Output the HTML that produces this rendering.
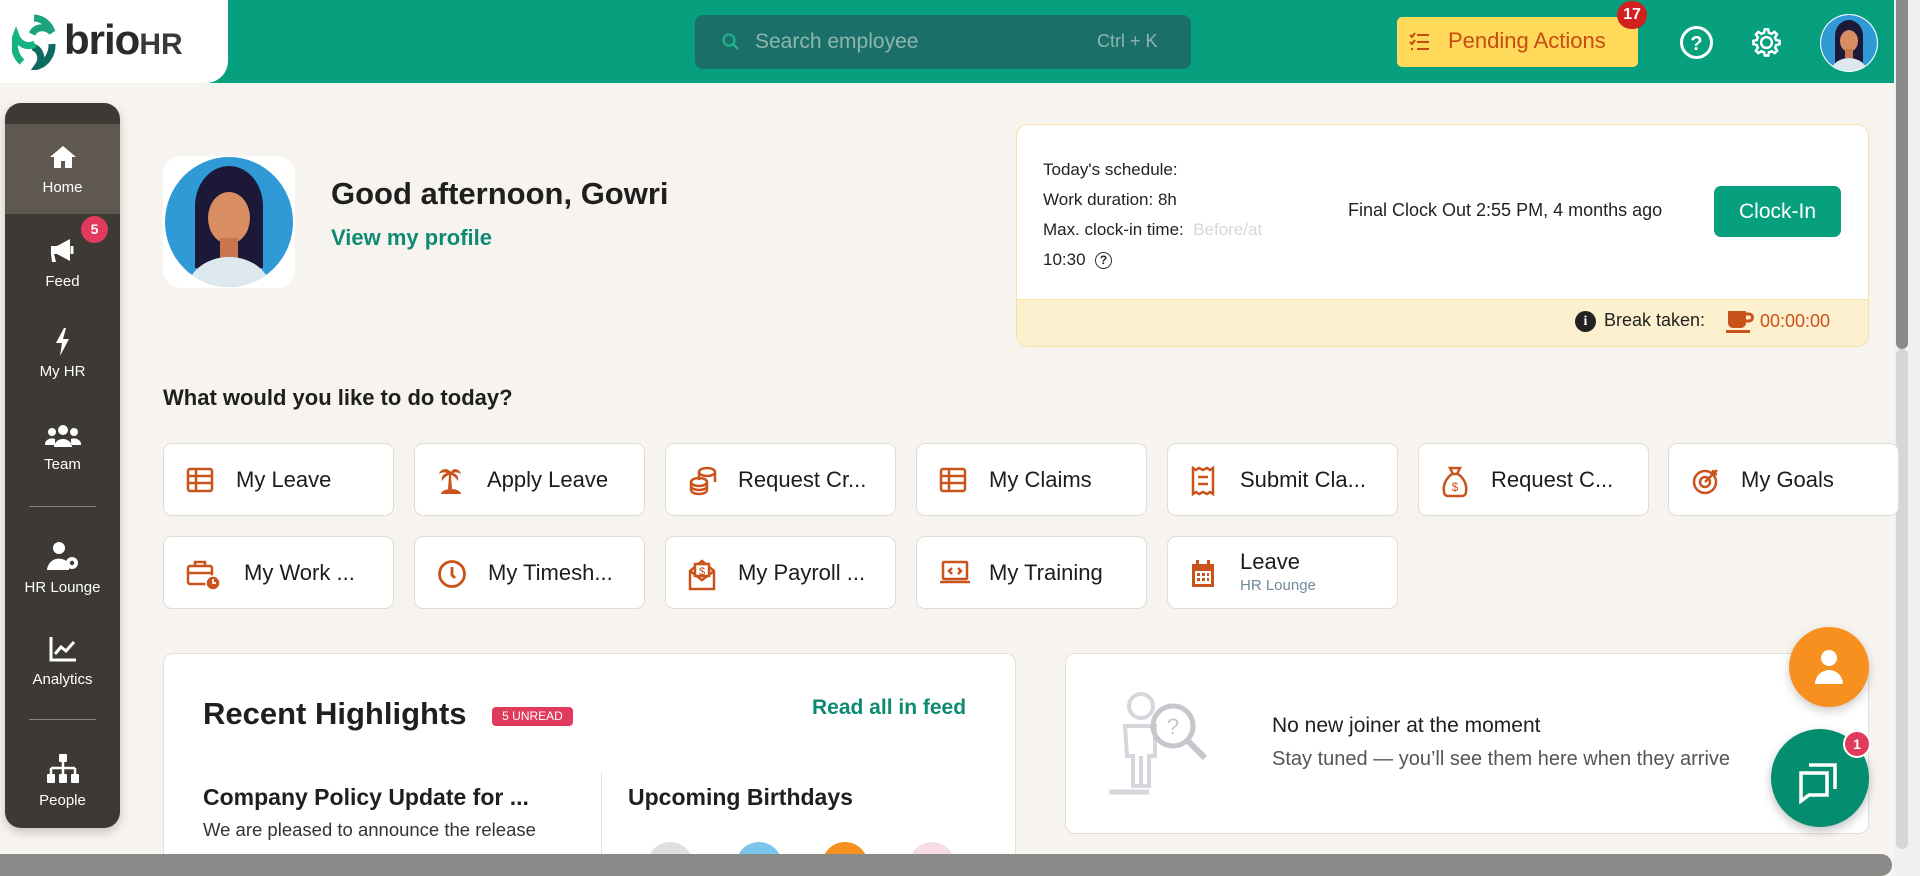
<!DOCTYPE html>
<html style="overflow:hidden;width:1920px;height:876px"><head><meta charset="utf-8"><style>
*{box-sizing:border-box;margin:0;padding:0}
body{width:1920px;height:876px;overflow:hidden;background:#f7f4ef;font-family:"Liberation Sans",sans-serif;color:#1f1f1f;position:relative}
.a{position:absolute}
.hdr{left:0;top:0;width:1894px;height:83px;background:#06a07f}
.logo{left:0;top:0;width:228px;height:83px;background:#fff;border-radius:0 0 22px 0}
.side{left:5px;top:103px;width:115px;height:725px;background:#3d3935;border-radius:16px;box-shadow:0 4px 10px rgba(0,0,0,.2)}
.nav{position:absolute;left:0;width:115px;text-align:center;color:#fff;font-size:15px}
.card{background:#fff;border:1px solid #e3e0db;border-radius:10px}
.tile{position:absolute;width:231px;height:73px;background:#fff;border:1px solid #e0ddd8;border-radius:9px;font-size:22px;color:#1c1c1c}
.tile span{position:absolute;left:72px;top:23px;white-space:nowrap}
.tile svg{position:absolute;left:22px;top:22px}
</style></head><body>
<div class="a hdr"></div>
<div class="a logo">
<svg class="a" style="left:12px;top:14px" width="44" height="56" viewBox="0 0 44 56"><path d="M22 4a20 22 0 0 1 18 14c-6-6-16-6-20 2" fill="none" stroke="#1aa37d" stroke-width="7"/><path d="M40 30a20 22 0 0 1-14 22c5-7 3-16-5-19" fill="none" stroke="#0d6b5f" stroke-width="7"/><path d="M10 48A20 22 0 0 1 4 22c3 8 11 12 19 8" fill="none" stroke="#14b381" stroke-width="7"/></svg>
<div class="a" style="left:64px;top:16px;font-size:42px;font-weight:bold;color:#2a2a2a;letter-spacing:-1px">brio<span style="font-size:30px;color:#3a3a3a;letter-spacing:0">HR</span></div>
</div>
<div class="a" style="left:695px;top:15px;width:496px;height:54px;background:#1a7069;border-radius:8px"></div>
<svg class="a" style="left:722px;top:33px" width="18" height="18" viewBox="0 0 18 18"><circle cx="7" cy="7" r="5.5" fill="none" stroke="#1fb48c" stroke-width="2.2"/><path d="M11 11l5 5" stroke="#1fb48c" stroke-width="2.4"/></svg>
<div class="a" style="left:755px;top:30px;font-size:21px;color:#8fb5ae">Search employee</div>
<div class="a" style="left:1097px;top:31px;font-size:18px;color:#8fb5ae">Ctrl + K</div>
<div class="a" style="left:1397px;top:17px;width:241px;height:50px;background:#ffd95a;border-radius:5px"></div>
<svg class="a" style="left:1408px;top:31px" width="22" height="22" viewBox="0 0 22 22" stroke="#c84b12" stroke-width="2" fill="none"><path d="M2 4l2 2 3-4M2 11l2 2 3-4M9 4h12M9 11h12M9 18h12M3 18h2"/></svg>
<div class="a" style="left:1448px;top:28px;font-size:22px;color:#c84b12">Pending Actions</div>
<div class="a" style="left:1617px;top:1px;width:30px;height:28px;border-radius:14px;background:#d2201e;color:#fff;font-size:16px;font-weight:bold;text-align:center;line-height:28px">17</div>
<svg class="a" style="left:1679px;top:25px" width="35" height="35" viewBox="0 0 35 35"><circle cx="17.5" cy="17.5" r="15" fill="none" stroke="#fff" stroke-width="3"/><text x="17.5" y="25" text-anchor="middle" font-family="Liberation Sans" font-weight="bold" font-size="20" fill="#fff">?</text></svg>
<svg class="a" style="left:1748px;top:24px" width="37" height="37" viewBox="0 0 24 24"><path d="M12 8.5a3.5 3.5 0 1 0 0 7 3.5 3.5 0 0 0 0-7zm8.5 4.6v-2.2l-2.3-.5a6.7 6.7 0 0 0-.7-1.7l1.3-2-1.6-1.6-2 1.3a6.7 6.7 0 0 0-1.7-.7L13.1 3.5h-2.2l-.5 2.2a6.7 6.7 0 0 0-1.7.7l-2-1.300-1.6 1.6 1.3 2a6.7 6.7 0 0 0-.7 1.7l-2.2.5v2.2l2.2.5c.1.6.4 1.2.7 1.7l-1.3 2 1.6 1.6 2-1.3c.5.3 1.1.6 1.7.7l.5 2.2h2.2l.5-2.2c.6-.1 1.2-.4 1.7-.7l2 1.3 1.6-1.6-1.3-2c.3-.5.6-1.1.7-1.7z" fill="none" stroke="#fff" stroke-width="1.6"/></svg>
<svg class="a" style="left:1820px;top:14px" width="58" height="58" viewBox="0 0 58 58"><defs><clipPath id="c1"><circle cx="29" cy="29" r="28"/></clipPath></defs><circle cx="29" cy="29" r="29" fill="#fff"/><g clip-path="url(#c1)"><circle cx="29" cy="29" r="28" fill="#2f9ad6"/><path d="M15 50V22a14 16 0 0 1 28 0v28z" fill="#1c1838"/><ellipse cx="29" cy="27" rx="9" ry="11" fill="#d98d63"/><rect x="25" y="35" width="8" height="9" fill="#c97650"/><ellipse cx="29" cy="58" rx="18" ry="14" fill="#dde9ef"/></g></svg>
<div class="a" style="left:1894px;top:0;width:26px;height:876px;background:#f0f0f0"></div>
<div class="a" style="left:1896px;top:0;width:12px;height:349px;background:#8a8a8a;border-radius:0 0 6px 6px"></div>
<div class="a" style="left:1896px;top:349px;width:12px;height:500px;background:#d6d6d6;border-radius:6px"></div>

<div class="a side">
<div class="a" style="left:0;top:21px;width:115px;height:90px;background:#5f5850"></div>
<div class="nav" style="top:41px"><svg width="30" height="26" viewBox="0 0 30 26"><path d="M15 2L2 13h4v11h7v-7h4v7h7V13h4z" fill="#fff"/></svg><div style="margin-top:5px">Home</div></div>
<div class="nav" style="top:133px"><svg width="30" height="28" viewBox="0 0 30 28"><path d="M3 10h6l13-7v22L9 18H6l2 8H4l-1-8z" fill="#fff"/><path d="M24 10v8" stroke="#fff" stroke-width="3"/></svg><div style="margin-top:5px">Feed</div></div>
<div class="a" style="left:76px;top:113px;width:27px;height:27px;border-radius:50%;background:#e03a5c;color:#fff;font-size:14px;font-weight:bold;text-align:center;line-height:27px">5</div>
<div class="nav" style="top:225px"><svg width="20" height="28" viewBox="0 0 20 28"><path d="M11 0L3 15h6l-2 13 9-17h-6l3-11z" fill="#fff"/></svg><div style="margin-top:3px">My HR</div></div>
<div class="nav" style="top:321px"><svg width="36" height="24" viewBox="0 0 36 24"><circle cx="18" cy="6" r="5" fill="#fff"/><circle cx="7" cy="8" r="4" fill="#fff"/><circle cx="29" cy="8" r="4" fill="#fff"/><path d="M9 23a9 8 0 0 1 18 0zM0 21a7 6 0 0 1 10-6v6zM36 21a7 6 0 0 0-10-6v6z" fill="#fff"/></svg><div style="margin-top:4px">Team</div></div>
<div class="a" style="left:24px;top:403px;width:67px;height:1px;background:#8a847e"></div>
<div class="nav" style="top:438px"><svg width="34" height="30" viewBox="0 0 34 30"><circle cx="13" cy="7" r="6" fill="#fff"/><path d="M1 29a12 12 0 0 1 22-6v6z" fill="#fff"/><circle cx="26" cy="22" r="6" fill="#fff"/><circle cx="26" cy="22" r="2.2" fill="#3d3935"/></svg><div style="margin-top:4px">HR Lounge</div></div>
<div class="nav" style="top:532px"><svg width="30" height="28" viewBox="0 0 30 28"><path d="M3 2v23h25" stroke="#fff" stroke-width="3" fill="none"/><path d="M7 19l6-7 5 4 8-9" stroke="#fff" stroke-width="3" fill="none"/></svg><div style="margin-top:4px">Analytics</div></div>
<div class="a" style="left:24px;top:616px;width:67px;height:1px;background:#8a847e"></div>
<div class="nav" style="top:651px"><svg width="34" height="30" viewBox="0 0 34 30"><rect x="13" y="0" width="8" height="8" rx="1" fill="#fff"/><path d="M17 8v6M5 14h24M5 14v6M17 14v6M29 14v6" stroke="#fff" stroke-width="2.5"/><rect x="1" y="20" width="8" height="9" rx="1" fill="#fff"/><rect x="13" y="20" width="8" height="9" rx="1" fill="#fff"/><rect x="25" y="20" width="8" height="9" rx="1" fill="#fff"/></svg><div style="margin-top:4px">People</div></div>
</div>

<div class="a" style="left:163px;top:156px;width:132px;height:132px;background:#fff;border-radius:18px"></div>
<svg class="a" style="left:163px;top:156px" width="132" height="132" viewBox="0 0 132 132"><defs><clipPath id="c2"><ellipse cx="66" cy="66" rx="64" ry="65"/></clipPath></defs><g clip-path="url(#c2)"><rect width="132" height="132" fill="#2f9ad6"/><path d="M32 112V50a34 40 0 0 1 68 0v62z" fill="#1c1838"/><ellipse cx="66" cy="62" rx="21" ry="26" fill="#d98d63"/><rect x="57" y="82" width="18" height="20" fill="#c97650"/><ellipse cx="66" cy="135" rx="42" ry="34" fill="#dde9ef"/></g></svg>
<div class="a" style="left:331px;top:176px;font-size:31px;font-weight:bold;color:#1f1f1f">Good afternoon, Gowri</div>
<div class="a" style="left:331px;top:225px;font-size:22px;font-weight:bold;color:#0f8a72">View my profile</div>

<div class="a" style="left:1016px;top:124px;width:853px;height:223px;background:#fff;border:1px solid #f2e3a5;border-radius:12px;overflow:hidden">
<div class="a" style="left:0;top:174px;width:853px;height:49px;background:#fdf0cf;border-top:1px solid #f2e3a5"></div>
</div>
<div class="a" style="left:1043px;top:155px;font-size:17px;line-height:30px;color:#222">Today's schedule:<br>Work duration: 8h<br>Max. clock-in time: &nbsp;<span style="color:#d5d8d6">Before/at</span><br>10:30 &nbsp;<span style="display:inline-block;width:17px;height:17px;border:1.5px solid #333;border-radius:50%;font-size:12px;line-height:14px;text-align:center;vertical-align:middle;font-weight:bold">?</span></div>
<div class="a" style="left:1348px;top:200px;font-size:18px;color:#222">Final Clock Out 2:55 PM, 4 months ago</div>
<div class="a" style="left:1714px;top:186px;width:127px;height:51px;background:#06a07f;border-radius:7px;color:#fff;font-size:21px;text-align:center;line-height:51px">Clock-In</div>
<div class="a" style="left:1575px;top:311px;width:21px;height:21px;border-radius:50%;background:#222;color:#fff;font-size:14px;font-weight:bold;text-align:center;line-height:21px;font-family:'Liberation Serif'">i</div>
<div class="a" style="left:1604px;top:310px;font-size:18px;color:#222">Break taken:</div>
<svg class="a" style="left:1726px;top:310px" width="28" height="24" viewBox="0 0 28 24"><path d="M2 1h18v12a5 5 0 0 1-5 5H7a5 5 0 0 1-5-5z" fill="#c9531a"/><path d="M20 4h3a3 3 0 0 1 0 7h-3" fill="none" stroke="#c9531a" stroke-width="3"/><rect x="0" y="20" width="24" height="3" fill="#c9531a"/></svg>
<div class="a" style="left:1760px;top:311px;font-size:18px;color:#c9531a">00:00:00</div>

<div class="a" style="left:163px;top:385px;font-size:22px;font-weight:bold;color:#1f1f1f">What would you like to do today?</div>

<div class="tile" style="left:163px;top:443px"><svg width="28" height="28" viewBox="0 0 28 28" fill="none" stroke="#c9531a" stroke-width="2.5"><rect x="2" y="3" width="24" height="22" rx="2"/><path d="M2 10h24M2 17h24M10 3v22"/></svg><span>My Leave</span></div>
<div class="tile" style="left:414px;top:443px"><svg width="28" height="30" viewBox="0 0 28 30" fill="#c9531a"><path d="M14 6c-4-5-11-3-12 2 3-2 6-2 8-1-4 1-6 4-5 8 2-3 4-5 7-6l-1 14h4l-1-14c3 1 5 3 7 6 1-4-1-7-5-8 2-1 5-1 8 1-1-5-8-7-10-2z"/><path d="M4 28a10 5 0 0 1 20 0z"/></svg><span>Apply Leave</span></div>
<div class="tile" style="left:665px;top:443px"><svg width="30" height="30" viewBox="0 0 30 30" fill="none" stroke="#c9531a" stroke-width="2.5"><ellipse cx="19" cy="6" rx="8" ry="4"/><path d="M11 6v8M27 6v10"/><ellipse cx="11" cy="16" rx="8" ry="4"/><path d="M3 16v8a8 4 0 0 0 16 0v-8M3 20a8 4 0 0 0 16 0"/></svg><span>Request Cr...</span></div>
<div class="tile" style="left:916px;top:443px"><svg width="28" height="28" viewBox="0 0 28 28" fill="none" stroke="#c9531a" stroke-width="2.5"><rect x="2" y="3" width="24" height="22" rx="2"/><path d="M2 10h24M2 17h24M10 3v22"/></svg><span>My Claims</span></div>
<div class="tile" style="left:1167px;top:443px"><svg width="26" height="30" viewBox="0 0 26 30" fill="none" stroke="#c9531a" stroke-width="2.5"><path d="M3 2l3 2 3-2 4 2 4-2 3 2 3-2v26l-3-2-3 2-4-2-4 2-3-2-3 2z"/><path d="M8 11h10M8 18h10"/></svg><span>Submit Cla...</span></div>
<div class="tile" style="left:1418px;top:443px"><svg width="28" height="32" viewBox="0 0 28 32" fill="none" stroke="#c9531a" stroke-width="2.5"><path d="M9 2h10l-3 6h-4zM11 8C4 13 2 20 3 26a4 4 0 0 0 4 4h14a4 4 0 0 0 4-4c1-6-1-13-8-18"/><text x="14" y="25" text-anchor="middle" font-size="12" fill="#c9531a" stroke="none" font-family="Liberation Sans">$</text></svg><span>Request C...</span></div>
<div class="tile" style="left:1668px;top:443px"><svg width="30" height="30" viewBox="0 0 30 30" fill="none" stroke="#c9531a" stroke-width="2.5"><circle cx="14" cy="16" r="11"/><circle cx="14" cy="16" r="5"/><path d="M14 16l12-12M22 4v4h4"/></svg><span>My Goals</span></div>

<div class="tile" style="left:163px;top:536px"><svg width="36" height="32" viewBox="0 0 36 32" fill="none" stroke="#c9531a" stroke-width="2.5"><rect x="2" y="7" width="24" height="18" rx="2"/><path d="M9 7V3h10v4M2 14h24"/><circle cx="27" cy="24" r="7" fill="#c9531a" stroke="#fff" stroke-width="1.5"/><path d="M27 20v4h3" stroke="#fff" stroke-width="1.8"/></svg><span style="left:80px">My Work ...</span></div>
<div class="tile" style="left:414px;top:536px"><svg width="30" height="30" viewBox="0 0 30 30" fill="none" stroke="#c9531a" stroke-width="2.8"><circle cx="15" cy="15" r="12.5"/><path d="M15 8v8l3 3"/></svg><span style="left:73px">My Timesh...</span></div>
<div class="tile" style="left:665px;top:536px"><svg width="28" height="32" viewBox="0 0 28 32" fill="none" stroke="#c9531a" stroke-width="2.5"><path d="M2 12l12-10 12 10v18H2zM2 12l12 9 12-9"/><rect x="7" y="5" width="14" height="12" fill="#fff"/><text x="14" y="16" text-anchor="middle" font-size="11" fill="#c9531a" stroke="none" font-family="Liberation Sans">$</text></svg><span>My Payroll ...</span></div>
<div class="tile" style="left:916px;top:536px"><svg width="32" height="28" viewBox="0 0 32 28" fill="none" stroke="#c9531a" stroke-width="2.5"><rect x="4" y="3" width="24" height="17" rx="1"/><path d="M1 23h30M13 9l-3 3 3 3M19 9l3 3-3 3"/></svg><span>My Training</span></div>
<div class="tile" style="left:1167px;top:536px"><svg width="26" height="30" viewBox="0 0 26 30" fill="#c9531a"><path d="M2 5h22v23H2z"/><rect x="6" y="1" width="3" height="7"/><rect x="17" y="1" width="3" height="7"/><rect x="5" y="12" width="16" height="13" fill="#fff"/><g fill="#c9531a"><rect x="7" y="14" width="3" height="3"/><rect x="12" y="14" width="3" height="3"/><rect x="17" y="14" width="2" height="3"/><rect x="7" y="19" width="3" height="3"/><rect x="12" y="19" width="3" height="3"/><rect x="17" y="19" width="2" height="3"/></g></svg><span style="top:12px">Leave</span><span style="top:40px;font-size:15px;color:#6f8a9a">HR Lounge</span></div>

<div class="a card" style="left:163px;top:653px;width:853px;height:223px;border-bottom:none;border-radius:10px 10px 0 0"></div>
<div class="a" style="left:203px;top:696px;font-size:31px;font-weight:bold;color:#1f1f1f">Recent Highlights</div>
<div class="a" style="left:492px;top:707px;width:81px;height:19px;background:#e03a5c;border-radius:4px;color:#fff;font-size:12px;text-align:center;line-height:19px">5 UNREAD</div>
<div class="a" style="left:812px;top:696px;font-size:21px;font-weight:bold;color:#0f8a72">Read all in feed</div>
<div class="a" style="left:601px;top:772px;width:1px;height:90px;background:#e3e0db"></div>
<div class="a" style="left:203px;top:784px;font-size:23px;font-weight:bold;color:#1f1f1f">Company Policy Update for ...</div>
<div class="a" style="left:203px;top:819px;font-size:18.5px;color:#333">We are pleased to announce the release</div>
<div class="a" style="left:628px;top:784px;font-size:23px;font-weight:bold;color:#1f1f1f">Upcoming Birthdays</div>
<div class="a" style="left:647px;top:842px;width:46px;height:34px;border-radius:23px 23px 0 0;background:#dfe0e3"></div>
<div class="a" style="left:736px;top:842px;width:46px;height:34px;border-radius:23px 23px 0 0;background:#7cc6ee"></div>
<div class="a" style="left:822px;top:842px;width:46px;height:34px;border-radius:23px 23px 0 0;background:#f7901e"></div>
<div class="a" style="left:909px;top:842px;width:46px;height:34px;border-radius:23px 23px 0 0;background:#f8dbe8"></div>
<div class="a" style="left:0;top:854px;width:1892px;height:22px;background:#888a88;border-radius:0 11px 11px 0"></div>

<div class="a card" style="left:1065px;top:653px;width:804px;height:181px"></div>
<svg class="a" style="left:1105px;top:690px" width="125" height="106" viewBox="0 0 125 106" fill="none" stroke="#d5d7dc" stroke-width="4"><circle cx="36" cy="16" r="12"/><path d="M20 36h30v30h-6v30H28V66h-6zM36 66v30"/><path d="M4 102h40" stroke-width="5"/><circle cx="68" cy="36" r="20" stroke="#c4c7cc" stroke-width="5"/><path d="M82 50l18 18" stroke="#c4c7cc" stroke-width="6"/><text x="68" y="44" text-anchor="middle" font-size="22" fill="#c4c7cc" stroke="none" font-family="Liberation Sans">?</text></svg>
<div class="a" style="left:1272px;top:714px;font-size:21px;color:#1f1f1f">No new joiner at the moment</div>
<div class="a" style="left:1272px;top:748px;font-size:20px;color:#555;white-space:nowrap;width:520px;overflow:hidden">Stay tuned — you’ll see them here when they arrive</div>

<div class="a" style="left:1789px;top:627px;width:80px;height:80px;border-radius:50%;background:#f7901e;box-shadow:0 4px 10px rgba(0,0,0,.2)"></div>
<svg class="a" style="left:1812px;top:648px" width="34" height="38" viewBox="0 0 34 38" fill="#fff"><circle cx="17" cy="10" r="8"/><path d="M3 36a14 14 0 0 1 28 0z"/></svg>
<div class="a" style="left:1771px;top:729px;width:98px;height:98px;border-radius:50%;background:#058d6f;box-shadow:0 4px 10px rgba(0,0,0,.25)"></div>
<svg class="a" style="left:1797px;top:757px" width="48" height="48" viewBox="0 0 48 48" fill="none" stroke="#fff" stroke-width="3.5"><path d="M12 8h26v24M4 16h26v22H12l-8 6z"/></svg>
<div class="a" style="left:1843px;top:730px;width:28px;height:28px;border-radius:50%;background:#e03a5c;border:2px solid #fff;color:#fff;font-size:14px;font-weight:bold;text-align:center;line-height:24px">1</div>
</body></html>
